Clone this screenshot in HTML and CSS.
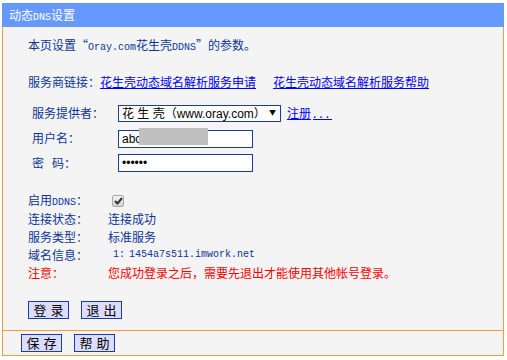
FILE: index.html
```html
<!DOCTYPE html>
<html lang="zh-CN">
<head>
    <meta charset="UTF-8">
    <title>动态DNS设置</title>
    <link rel="stylesheet" href="styles.css">
</head>
<body>
    <div class="panel">
        <div class="title">动态<span class="en">DNS</span>设置</div>

        <div class="main">
            <p class="intro">本页设置<span class="q-open">“</span><span class="en">Oray.com</span>花生壳<span class="en">DDNS</span><span class="q-close">”</span>的参数。</p>

            <div class="links">
                <span>服务商链接：</span>
                <a href="#">花生壳动态域名解析服务申请</a>
                <a href="#" class="link-help">花生壳动态域名解析服务帮助</a>
            </div>

            <div class="form">
                <div class="row">
                    <label>服务提供者：</label>
                    <span class="select-wrap">
                        <select>
                            <option>花 生 壳（www.oray.com）</option>
                        </select>
                    </span>
                    <a href="#" class="reg">注册<span class="dots">...</span></a>
                </div>
                <div class="row">
                    <label>用户名：</label>
                    <span class="input-wrap">
                        <input type="text" value="abc">
                        <span class="mask"></span>
                    </span>
                </div>
                <div class="row">
                    <label>密<span class="sp"></span>码：</label>
                    <input type="password" value="123456">
                </div>
            </div>

            <div class="status">
                <div class="row">
                    <span class="key">启用<span class="en">DDNS</span>：</span>
                    <span class="check">
                        <svg width="9" height="8" viewBox="0 0 9 8"><path d="M1 4 L3.5 6.5 L8 1" fill="none" stroke="#333" stroke-width="2"/></svg>
                    </span>
                </div>
                <div class="row">
                    <span class="key">连接状态：</span>
                    <span>连接成功</span>
                </div>
                <div class="row">
                    <span class="key">服务类型：</span>
                    <span>标准服务</span>
                </div>
                <div class="row">
                    <span class="key">域名信息：</span>
                    <span class="en domain">1: 1454a7s511.imwork.net</span>
                </div>
                <div class="row warn">
                    <span class="key">注意：</span>
                    <span>您成功登录之后，需要先退出才能使用其他帐号登录。</span>
                </div>
            </div>

            <div class="actions">
                <button class="btn">登录</button>
                <button class="btn">退出</button>
            </div>
        </div>

        <div class="footer">
            <button class="btn">保存</button>
            <button class="btn">帮助</button>
        </div>
    </div>
</body>
</html>
```

FILE: styles.css
```css
body {
    margin: 0;
    background: #ffffff;
    font-family: "Noto Sans CJK SC", "Liberation Sans", sans-serif;
    font-size: 12px;
    line-height: 18px;
    color: #0b3597;
}

.panel {
    width: 502px;
    margin: 3px 0 0 2px;
}

.title {
    height: 24px;
    line-height: 24px;
    padding-left: 7px;
    background: #6699ff;
    color: #ffffff;
}

.en {
    font-family: "Liberation Mono", monospace;
    font-size: 10px;
}

.main {
    background: #f4f4f4;
    border-left: 1px solid #ff9933;
    border-right: 1px solid #ff9933;
    padding: 9px 0 11px 25px;
}

.intro {
    margin: 0;
    height: 18px;
}

.q-open, .q-close {
    display: inline-block;
    width: 12px;
}

.q-open {
    text-align: right;
}

.links {
    margin-top: 19px;
    height: 18px;
    display: flex;
}

.links a {
    color: #0000ff;
}

.links .link-help {
    margin-left: 17px;
}

.form {
    margin-top: 13px;
    padding-left: 4px;
    display: flex;
    flex-direction: column;
    gap: 7px;
}

.form .row {
    display: flex;
    align-items: center;
    height: 18px;
}

.form label {
    width: 86px;
}

.form .sp {
    display: inline-block;
    width: 8px;
}

.select-wrap {
    position: relative;
    display: inline-block;
}

.select-wrap select {
    appearance: none;
    -webkit-appearance: none;
    width: 163px;
    height: 17px;
    padding: 0 0 0 3px;
    border: 1px solid #1a3caa;
    border-radius: 0;
    background: #ffffff;
    color: #000000;
    font-family: "Liberation Sans", "Noto Sans CJK SC", sans-serif;
    font-size: 12px;
}

.select-wrap::after {
    content: "▼";
    position: absolute;
    right: 5px;
    top: 2px;
    font-size: 7px;
    line-height: 12px;
    color: #000000;
}

.reg {
    margin-left: 6px;
    color: #0000ff;
}

.reg .dots {
    padding-left: 2px;
    letter-spacing: 3px;
}

.input-wrap {
    position: relative;
    display: inline-block;
    height: 18px;
}

input[type="text"], input[type="password"] {
    box-sizing: border-box;
    width: 135px;
    height: 18px;
    margin: 0;
    padding: 0 3px;
    border: 1px solid #1a3caa;
    border-radius: 0;
    background: #ffffff;
    color: #000000;
    font-family: "Liberation Sans", sans-serif;
    font-size: 12px;
    outline: none;
}

input[type="password"] {
    letter-spacing: 0;
}

.mask {
    position: absolute;
    left: 21px;
    top: -1px;
    width: 69px;
    height: 17px;
    background: #c0c0c0;
}

.status {
    margin-top: 20px;
}

.status .row {
    display: flex;
    align-items: center;
    height: 18px;
}

.status .key {
    width: 80px;
}

.check {
    box-sizing: border-box;
    width: 12px;
    height: 12px;
    margin-left: 4px;
    border: 1px solid #a9a9a9;
    border-radius: 2px;
    background: linear-gradient(#f2f2f2, #d4d4d4);
    display: flex;
    align-items: center;
    justify-content: center;
}

.domain {
    padding-left: 5px;
    word-spacing: -2px;
}

.warn {
    color: #ff0000;
}

.actions {
    margin-top: 19px;
    display: flex;
    gap: 12px;
}

.btn {
    box-sizing: border-box;
    width: 41px;
    height: 18px;
    padding: 0 0 0 4px;
    border: 1px solid #1a3caa;
    border-radius: 0;
    background: #dcdcff;
    color: #000000;
    font-family: "Noto Sans CJK SC", sans-serif;
    font-size: 13px;
    line-height: 16px;
    letter-spacing: 4px;
}

.footer {
    display: flex;
    gap: 12px;
    padding: 3px 0 3px 18px;
    background: #f4f4f4;
    border: 1px solid #ff9933;
}
```
